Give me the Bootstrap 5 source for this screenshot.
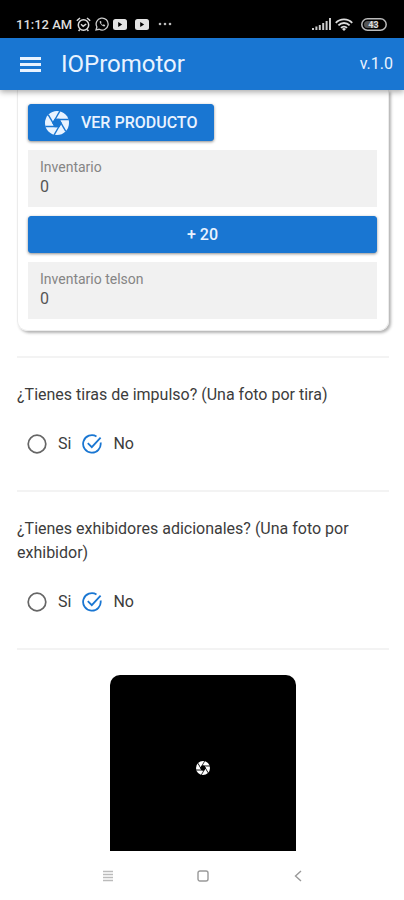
<!DOCTYPE html>
<html lang="es">
<head>
<meta charset="utf-8">
<meta name="viewport" content="width=device-width, initial-scale=1">
<title>IOPromotor</title>
<link href="https://cdn.jsdelivr.net/npm/bootstrap@5.3.0/dist/css/bootstrap.min.css" rel="stylesheet">
<style>
  body { font-family: Roboto, "Liberation Sans", sans-serif; font-size: 16px; line-height: 24px; color: #3c3c3c; background: #fff; }
  svg { display: block; flex: none; }
  .status-bar { height: 38px; padding: 10px 17px 0 16px; font-size: 13px; font-weight: 500; color: #ddd; background: #000; }
  .app-bar { height: 52px; padding: 0 11px 0 20px; background: #1976d2; color: #e9f3ff; box-shadow: 0 2px 6px rgba(0,0,0,.35); z-index: 2; }
  .app-title { font-size: 24px; line-height: 32px; font-weight: 400; }
  .content-area { padding: 0 15px 0 17px; min-height: 0; }
  .product-card { border: 1px solid #ececec; border-top: 0; border-radius: 0 0 10px 10px; padding: 14px 11px 11px 10px; gap: 9px; box-shadow: 2px 2px 3px rgba(0,0,0,.3); }
  .btn-app { --bs-btn-color: #e9f3ff; --bs-btn-bg: #1976d2; --bs-btn-border-color: #1976d2; --bs-btn-hover-color: #fff; --bs-btn-hover-bg: #1565c0; --bs-btn-border-radius: 3px; --bs-btn-font-weight: 500; --bs-btn-line-height: 25px; --bs-btn-padding-y: 5px; --bs-btn-padding-x: 16px; box-shadow: 0 1px 3px rgba(0,0,0,.45); }
  .field-box { background: #f1f1f1; padding: 7px 12px 10px; }
  .field-box label { font-size: 14px; line-height: 20px; color: #858585; }
  .field-box input { line-height: 20px; color: #555; }
  .rule-line { border-top: 2px solid #f3f3f3; opacity: 1; margin: 34px 0 25px; }
  .product-card + .rule-line { margin-top: 25px; }
  .question { font-size: 16px; line-height: 24px; margin-bottom: 25px; }
  .choice { appearance: none; width: 20px; height: 20px; margin: 0; background: center / 20px no-repeat url("data:image/svg+xml,%3Csvg xmlns='http://www.w3.org/2000/svg' viewBox='0 0 20 20' fill='none' stroke='%23666' stroke-width='1.7'%3E%3Ccircle cx='10' cy='10' r='8.8'/%3E%3C/svg%3E"); }
  .choice:checked { background-image: url("data:image/svg+xml,%3Csvg xmlns='http://www.w3.org/2000/svg' viewBox='0 0 20 20' fill='none' stroke='%231976d2' stroke-width='1.8'%3E%3Cpath d='M18.6 8.5A8.8 8.8 0 1 1 14.5 2.4M5.8 9.2l4 4L18.6 3.6'/%3E%3C/svg%3E"); }
  .choices { padding: 0 10px; gap: 11px; }
  .camera-box { background: #000; border-radius: 10px; }
  .system-nav { height: 49px; color: #999; padding: 0 100px 0 102px; }
</style>
</head>
<body>
<svg class="position-absolute" width="0" height="0" aria-hidden="true">
  <defs>
    <mask id="blades" maskUnits="userSpaceOnUse" x="0" y="0" width="24" height="24">
      <circle cx="12" cy="12" r="12" fill="#fff"/>
      <g transform="translate(12 12)" stroke="#000" stroke-width="1.4">
        <path d="M4 0 2 3.46-2 3.46-4 0-2-3.46 2-3.46Z" fill="#000"/>
        <path d="M4 0-2.8 11.8"/>
        <path d="M4 0-2.8 11.8" transform="rotate(60)"/>
        <path d="M4 0-2.8 11.8" transform="rotate(120)"/>
        <path d="M4 0-2.8 11.8" transform="rotate(180)"/>
        <path d="M4 0-2.8 11.8" transform="rotate(240)"/>
        <path d="M4 0-2.8 11.8" transform="rotate(300)"/>
      </g>
    </mask>
    <symbol id="aperture" viewBox="0 0 24 24"><rect width="24" height="24" fill="currentColor" mask="url(#blades)"/></symbol>
  </defs>
</svg>
<div class="vh-100 d-flex flex-column overflow-hidden">
  <div class="status-bar d-flex align-items-center justify-content-between flex-shrink-0">
    <div class="d-flex align-items-center gap-1">
      <span class="lh-1 text-nowrap">11:12 AM</span>
      <svg width="15" height="15" viewBox="0 0 15 15" fill="none" stroke="#ddd" stroke-width="1.5"><circle cx="7.5" cy="8" r="5.2"/><path d="M.8 3.7 4 1M14.2 3.7 11 1M5 7.2l2.2 2 3-2.2M3.8 12.5 2.6 14M11.2 12.5l1.2 1.5"/></svg>
      <svg width="14" height="14" viewBox="0 0 14 14" fill="none" stroke="#ccc" stroke-width="1.3"><path d="M1 13l.9-3A6 6 0 1 1 4.2 12.3Z"/><path d="M4.8 4.2c-.9 1.3 2.6 5.5 4.7 5.2l.8-1.2-1.6-.9-.8.7C7 7.6 6.3 6.8 6 6l.6-.7-.7-1.4Z" fill="#ccc" stroke="none"/></svg>
      <svg width="14" height="11" viewBox="0 0 14 11"><rect width="14" height="11" rx="2.5" fill="#e4e4e4"/><path d="M5.2 3v5l4-2.5Z" fill="#000"/></svg>
      <svg class="ms-1" width="14" height="11" viewBox="0 0 14 11"><rect width="14" height="11" rx="2.5" fill="#e4e4e4"/><path d="M5.2 3v5l4-2.5Z" fill="#000"/></svg>
      <svg class="ms-1" width="16" height="4" viewBox="0 0 16 4" fill="#bbb"><circle cx="3" cy="2" r="1.3"/><circle cx="8" cy="2" r="1.3"/><circle cx="13" cy="2" r="1.3"/></svg>
    </div>
    <div class="d-flex align-items-center gap-1">
      <svg width="19" height="12" viewBox="0 0 19 12" fill="#ccc"><path d="M0 10h2v2H0zM3.4 8.5h2V12h-2zM6.8 7h2v5h-2zM10.2 5h2v7h-2zM13.6 3h2v9h-2zM17 0h2v12h-2z"/></svg>
      <svg width="18" height="13" viewBox="0 0 18 13" fill="none" stroke="#ddd" stroke-width="1.9"><path d="M.8 4.8a11.6 11.6 0 0 1 16.4 0M3.4 7.4a7.9 7.9 0 0 1 11.2 0M6 9.9a4.2 4.2 0 0 1 6 0"/><path d="M9 13l-2-2a2.8 2.8 0 0 1 4 0Z" fill="#ddd" stroke="none"/></svg>
      <svg class="ms-1" width="26" height="13" viewBox="0 0 26 13"><rect x=".8" y=".8" width="24.4" height="11.4" rx="5.7" fill="none" stroke="#bbb" stroke-width="1.5"/><rect x="3" y="3" width="13" height="7" rx="3.5" fill="#555"/><text x="12.5" y="9.7" font-size="9" font-weight="700" text-anchor="middle" fill="#ddd">43</text></svg>
    </div>
  </div>
  <header class="app-bar d-flex align-items-center flex-shrink-0 position-relative">
    <button type="button" class="btn p-0 border-0 text-reset" aria-label="Menú"><svg width="21" height="15" viewBox="0 0 21 15" fill="currentColor"><path d="M0 0h21v3H0zM0 6h21v3H0zM0 12h21v3H0z"/></svg></button>
    <h1 class="app-title mb-0 ms-3 ps-1">IOPromotor</h1>
    <span class="ms-auto">v.1.0</span>
  </header>
  <main class="content-area flex-grow-1 overflow-hidden">
    <section class="product-card d-flex flex-column">
      <button type="button" class="btn btn-app align-self-start d-flex align-items-center"><svg class="me-2" width="24" height="24"><use href="#aperture"/></svg><span class="ms-1">VER PRODUCTO</span></button>
      <div class="field-box"><label class="d-block" for="inv">Inventario</label><input id="inv" class="form-control-plaintext p-0 border-0" value="0"></div>
      <button type="button" class="btn btn-app">+ 20</button>
      <div class="field-box"><label class="d-block" for="tel">Inventario telson</label><input id="tel" class="form-control-plaintext p-0 border-0" value="0"></div>
    </section>
    <hr class="rule-line">
    <fieldset>
      <legend class="question">¿Tienes tiras de impulso? (Una foto por tira)</legend>
      <div class="choices d-flex align-items-center">
        <input class="choice" type="radio" name="tiras" id="t1"><label for="t1">Si</label>
        <input class="choice" type="radio" name="tiras" id="t2" checked><label for="t2">No</label>
      </div>
    </fieldset>
    <hr class="rule-line">
    <fieldset>
      <legend class="question">¿Tienes exhibidores adicionales? (Una foto por exhibidor)</legend>
      <div class="choices d-flex align-items-center">
        <input class="choice" type="radio" name="exhibidores" id="e1"><label for="e1">Si</label>
        <input class="choice" type="radio" name="exhibidores" id="e2" checked><label for="e2">No</label>
      </div>
    </fieldset>
    <hr class="rule-line">
    <div class="camera-box ratio ratio-1x1 w-50 mx-auto">
      <button type="button" class="btn border-0 d-flex align-items-center justify-content-center text-white" aria-label="Tomar foto"><svg width="14" height="14"><use href="#aperture"/></svg></button>
    </div>
  </main>
  <nav class="system-nav d-flex align-items-center justify-content-between flex-shrink-0" aria-label="Sistema">
    <button type="button" class="btn p-0 border-0 text-reset" aria-label="Recientes"><svg width="12" height="12" viewBox="0 0 12 12" stroke="#bbb" stroke-width="1.5"><path d="M1 1.5h10M1 4.5h10M1 7.5h10M1 10.5h10"/></svg></button>
    <button type="button" class="btn p-0 border-0 text-reset" aria-label="Inicio"><svg width="12" height="12" viewBox="0 0 12 12" fill="none" stroke="#999" stroke-width="1.4"><rect x="1" y="1" width="10" height="10" rx="2"/></svg></button>
    <button type="button" class="btn p-0 border-0 text-reset" aria-label="Atrás"><svg width="12" height="12" viewBox="0 0 12 12" fill="none" stroke="#999" stroke-width="1.4"><path d="M9 1 3.5 6 9 11"/></svg></button>
  </nav>
</div>
<script src="https://cdn.jsdelivr.net/npm/bootstrap@5.3.0/dist/js/bootstrap.bundle.min.js"></script>
</body>
</html>
